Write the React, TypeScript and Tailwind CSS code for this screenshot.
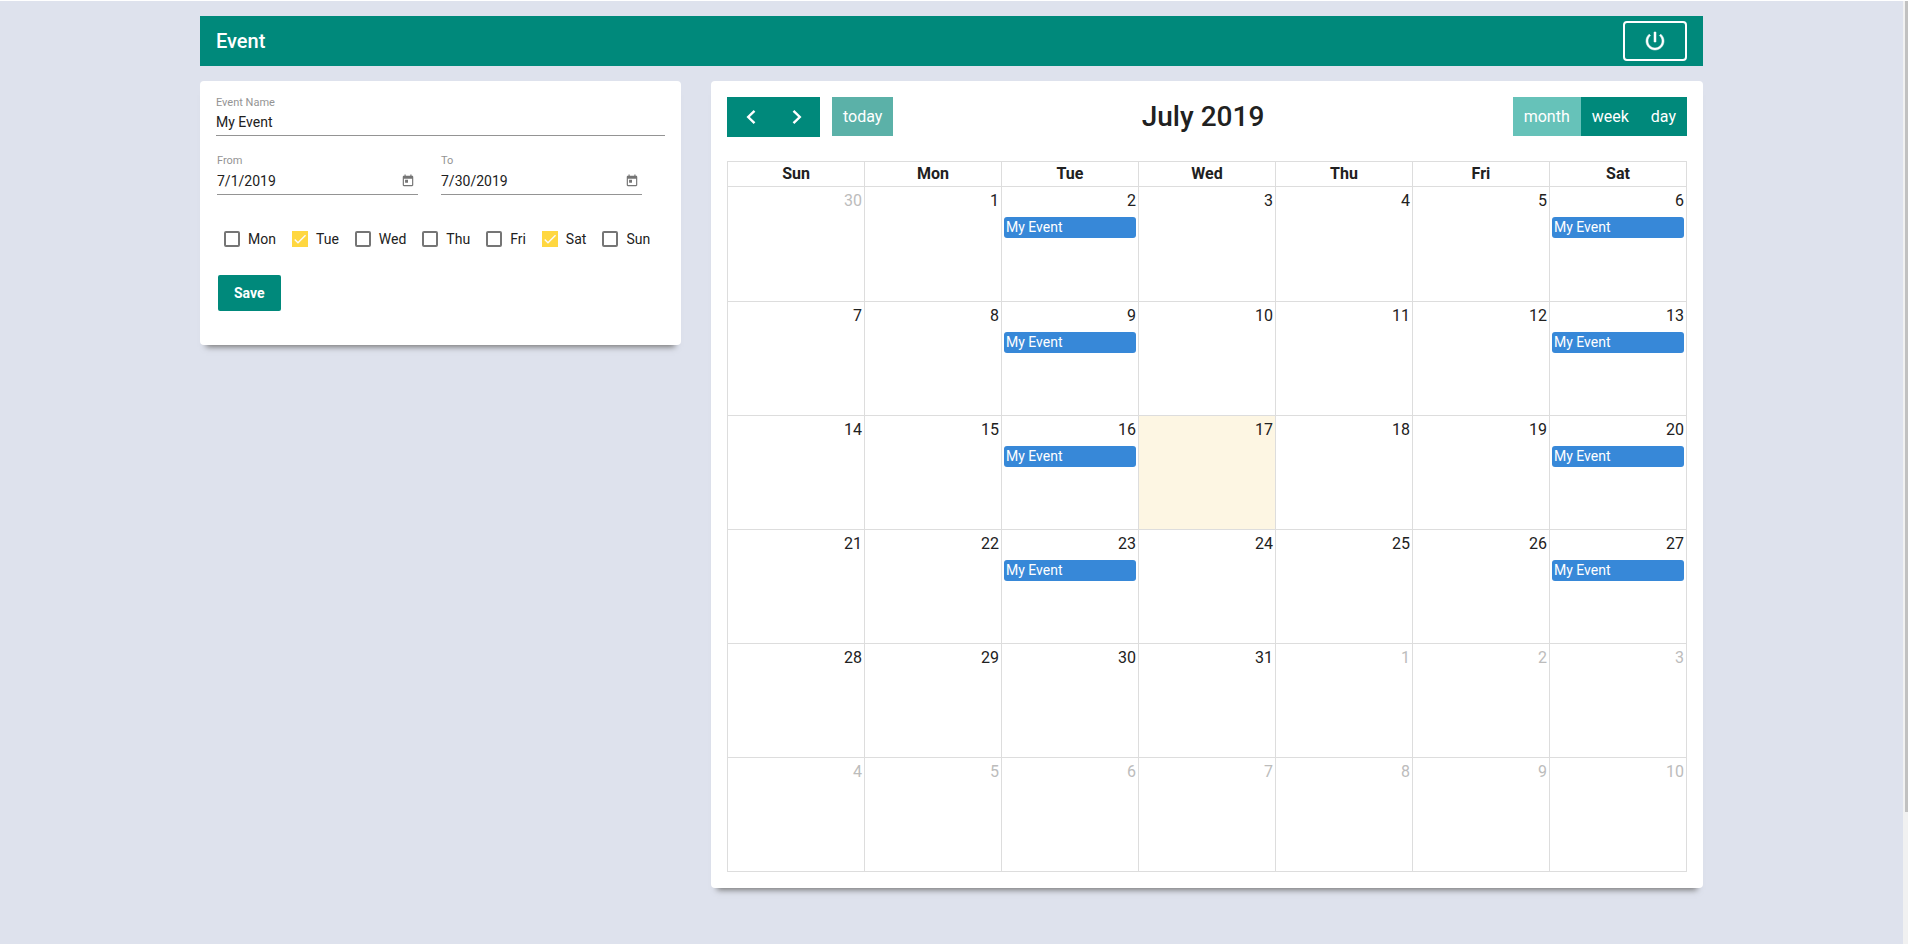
import React from "react";

type Day = { n: number; muted?: boolean; event?: boolean; today?: boolean };

const dayNames = ["Sun", "Mon", "Tue", "Wed", "Thu", "Fri", "Sat"];

const weeks: Day[][] = Array.from({ length: 6 }, (_, w) =>
  Array.from({ length: 7 }, (_, d) => {
    const i = w * 7 + d;
    if (i === 0) return { n: 30, muted: true };
    if (i > 31) return { n: i - 31, muted: true };
    return { n: i, event: (d === 2 || d === 6) && i < 30, today: i === 17 };
  }),
);

const repeatDays = [
  { label: "Mon", on: false },
  { label: "Tue", on: true },
  { label: "Wed", on: false },
  { label: "Thu", on: false },
  { label: "Fri", on: false },
  { label: "Sat", on: true },
  { label: "Sun", on: false },
];

const cardShadow = "shadow-[0_8px_6px_-6px_#777]";

function PowerIcon() {
  return (
    <svg
      viewBox="0 0 24 24"
      className="size-6"
      fill="currentColor"
      stroke="currentColor"
      strokeWidth="0.5"
      aria-hidden="true"
    >
      <path d="M13 3h-2v10h2V3zm4.83 2.17l-1.42 1.42C17.99 7.86 19 9.81 19 12c0 3.87-3.13 7-7 7s-7-3.13-7-7c0-2.19 1.01-4.14 2.58-5.42L6.17 5.17C4.23 6.82 3 9.26 3 12c0 4.97 4.03 9 9 9s9-4.03 9-9c0-2.74-1.23-5.18-3.17-6.83z" />
    </svg>
  );
}

function CalendarIcon() {
  return (
    <svg viewBox="0 0 24 24" className="size-[14px]" fill="currentColor" aria-hidden="true">
      <path d="M19 3h-1V1h-2v2H8V1H6v2H5c-1.11 0-1.99.9-1.99 2L3 19c0 1.1.89 2 2 2h14c1.1 0 2-.9 2-2V5c0-1.1-.9-2-2-2zm0 16H5V8h14v11zM7 10h5v5H7z" />
    </svg>
  );
}

function Chevron({ d }: { d: string }) {
  return (
    <svg viewBox="0 0 16 16" className="size-4" fill="none" stroke="currentColor" strokeWidth="2.4" aria-hidden="true">
      <path d={d} />
    </svg>
  );
}

function DateField({ id, label, value }: { id: string; label: string; value: string }) {
  return (
    <div className="w-[201px]">
      <label htmlFor={id} className="block text-[11px] leading-4 text-[#949494]">
        {label}
      </label>
      <div className="flex h-[26px] items-center border-b border-[#949494] pb-[2px]">
        <input id={id} defaultValue={value} className="min-w-0 flex-1 bg-transparent text-sm outline-none" />
        <button type="button" aria-label={`Pick ${label}`} className="px-[3px] text-[#757575]">
          <CalendarIcon />
        </button>
      </div>
    </div>
  );
}

function DayCheckbox({ label, on }: { label: string; on: boolean }) {
  return (
    <label className="flex items-center gap-2 text-sm leading-6">
      <span className="grid size-4">
        <input
          type="checkbox"
          defaultChecked={on}
          className="peer col-start-1 row-start-1 size-4 appearance-none rounded-[2px] border-2 border-[#757575] checked:rounded-none checked:border-0 checked:bg-[#ffd740]"
        />
        <svg
          viewBox="0 0 24 24"
          className="pointer-events-none invisible col-start-1 row-start-1 size-4 peer-checked:visible"
          fill="none"
          stroke="#fafafa"
          strokeWidth="2.1"
          aria-hidden="true"
        >
          <path d="M4.1 12.7 9 17.6 20.3 6.3" />
        </svg>
      </span>
      {label}
    </label>
  );
}

export default function App() {
  return (
    <div className="flex min-h-screen border-t border-white bg-[#dee2ed] font-[Roboto,sans-serif] text-[#212121]">
      <div className="min-w-0 flex-1 px-[200px] pt-[15px] pb-14">
        <header className="flex h-[50px] items-center justify-between bg-[#00897b] px-4 text-white">
          <h1 className="text-xl font-medium">Event</h1>
          <button
            type="button"
            aria-label="Log out"
            className="flex h-10 w-16 items-center justify-center rounded border-2 border-white"
          >
            <PowerIcon />
          </button>
        </header>

        <main className="mt-[15px] flex items-start justify-between">
          <form className={`w-[32%] rounded bg-white px-4 pt-[13px] pb-[34px] ${cardShadow}`}>
            <label htmlFor="event-name" className="block text-[11px] leading-[18px] text-[#949494]">
              Event Name
            </label>
            <input
              id="event-name"
              defaultValue="My Event"
              className="block h-6 w-full border-b border-[#949494] bg-transparent pb-1 text-sm outline-none"
            />
            <div className="mt-[17px] flex gap-[23px] pl-px">
              <DateField id="from" label="From" value="7/1/2019" />
              <DateField id="to" label="To" value="7/30/2019" />
            </div>
            <div className="mt-8 flex gap-4 pl-2">
              {repeatDays.map((d) => (
                <DayCheckbox key={d.label} label={d.label} on={d.on} />
              ))}
            </div>
            <button
              type="button"
              className="mt-6 ml-[2px] block h-9 rounded-[2px] bg-[#00897b] px-4 text-sm font-bold text-white"
            >
              Save
            </button>
          </form>

          <section className={`w-[66%] rounded bg-white p-4 ${cardShadow}`}>
            <div className="mb-6 flex h-10 items-start justify-between text-base text-white">
              <div className="flex items-start gap-3">
                <div className="flex bg-[#00897b]">
                  <button type="button" aria-label="Previous month" className="flex h-10 w-[47px] items-center justify-center">
                    <Chevron d="M11.5 1.8 5.2 8 11.5 14.2" />
                  </button>
                  <button type="button" aria-label="Next month" className="flex h-10 w-[46px] items-center justify-center">
                    <Chevron d="M4.5 1.8 10.8 8 4.5 14.2" />
                  </button>
                </div>
                <button type="button" className="h-[39px] bg-[#5bb1a8] px-[11px]">
                  today
                </button>
              </div>
              <h2 className="text-[28px] leading-10 font-medium text-[#212121]">July 2019</h2>
              <div className="flex justify-end">
                <button type="button" className="h-[39px] bg-[#66c2b9] px-[11px]">
                  month
                </button>
                <button type="button" className="h-[39px] bg-[#00897b] px-[11px]">
                  week
                </button>
                <button type="button" className="h-[39px] bg-[#00897b] px-[11px]">
                  day
                </button>
              </div>
            </div>

            <table className="w-full table-fixed border-collapse">
              <thead>
                <tr className="h-[25px]">
                  {dayNames.map((d) => (
                    <th key={d} scope="col" className="border border-[#ddd] p-0 text-base leading-6 font-bold">
                      {d}
                    </th>
                  ))}
                </tr>
              </thead>
              <tbody>
                {weeks.map((week, w) => (
                  <tr key={w} className="h-[114px] first:h-[115px]">
                    {week.map((day) => (
                      <td
                        key={day.n}
                        className={`border border-[#ddd] px-[2px] pt-[2px] pb-0 align-top ${day.today ? "bg-[#fdf6e3]" : ""}`}
                      >
                        <div className={`text-right text-base leading-6 ${day.muted ? "text-[#bcbcbc]" : ""}`}>{day.n}</div>
                        {day.event && (
                          <a
                            href="#event"
                            className="mt-1 block h-[21px] rounded-[3px] bg-[#3788d8] px-[2px] text-sm leading-[21px] text-white"
                          >
                            My Event
                          </a>
                        )}
                      </td>
                    ))}
                  </tr>
                ))}
              </tbody>
            </table>
          </section>
        </main>
      </div>
      <div className="w-[5px] shrink-0 bg-[#f1f1f1] pl-[2px]" aria-hidden="true">
        <div className="h-[86%] bg-[#c1c1c1]" />
      </div>
    </div>
  );
}
